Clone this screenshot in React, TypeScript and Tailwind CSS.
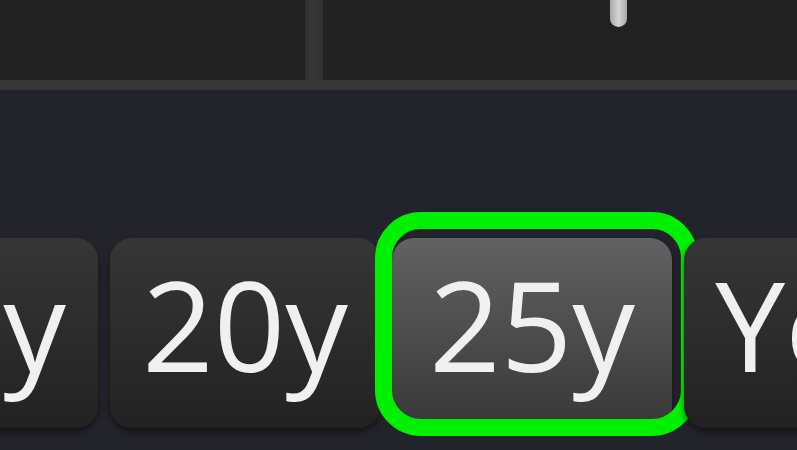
import React from "react";

function Btn({ label, w, selected, className = "" }: { label: string; w: string; selected?: boolean; className?: string }) {
  return (
    <div className={`relative shrink-0 ${w} ${className}`}>
      <div
        className={`h-[190px] rounded-[22px] flex justify-center items-start pt-[23px] text-[125px] leading-none text-[#f0f0f0] shadow-[0_4px_6px_rgba(0,0,0,0.45)] ${
          selected
            ? "bg-gradient-to-b from-[#626262] to-[#383838]"
            : "bg-gradient-to-b from-[#363636] to-[#222222]"
        }`}
        style={{ fontFamily: '"Open Sans", "Noto Sans", sans-serif' }}
      >
        {label}
      </div>
      {selected && (
        <div className="absolute top-[-26px] left-[-17px] right-[-26px] bottom-[-8px] rounded-[46px] border-[17px] border-[#00f000] pointer-events-none" />
      )}
    </div>
  );
}

export default function App() {
  return (
    <div className="w-[797px] h-[450px] overflow-hidden bg-[#23232b] flex flex-col">
      <div className="h-[80px] flex shrink-0">
        <div className="w-[305px] bg-[#222222]" />
        <div className="w-[18px] bg-gradient-to-r from-[#303030] via-[#383838] to-[#303030]" />
        <div className="flex-1 bg-[#222222] relative">
          <div className="absolute left-[287px] top-0 w-[17px] h-[27px] rounded-b-full bg-gradient-to-r from-[#a8a8a8] via-[#d4d4d4] to-[#a8a8a8]" />
        </div>
      </div>
      <div className="h-[10px] bg-[#363636] shrink-0" />
      <div className="flex gap-3 mt-[148px]">
        <Btn label="15y" w="w-[270px]" className="ml-[-172px]" />
        <Btn label="20y" w="w-[270px]" />
        <Btn label="25y" w="w-[280px]" selected />
        <Btn label="Yoy" w="w-[270px]" />
      </div>
    </div>
  );
}
